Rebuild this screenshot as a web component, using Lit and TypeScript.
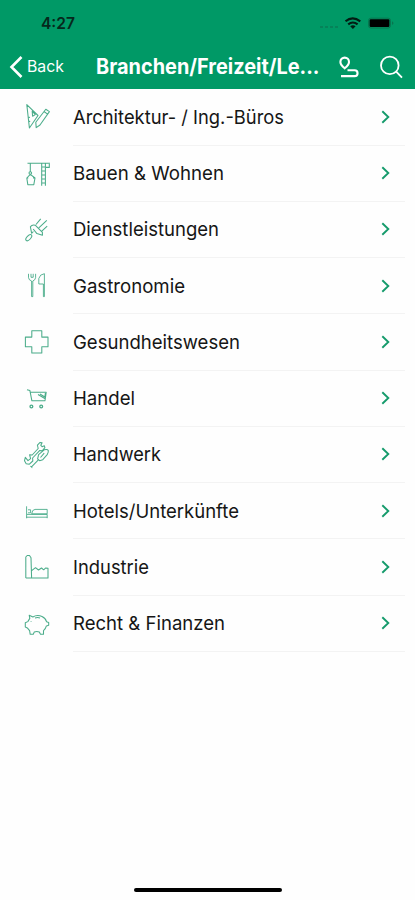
import { LitElement, html, css, svg } from "lit";
import { customElement } from "lit/decorators.js";

const rows = [
  { label: "Architektur- / Ing.-Büros", width: 211, icon: svg`<path d="M4.8 2.6 7.4 26 16 13.5ZM10.2 9.2l.4 5 2.7-1.6ZM23.8 7.2l3.6 2.4L18 23l-3.8 2.6-.4-5.3ZM22.3 9.8l3.3 2.3M6 15l2 .5M6.4 19l1.8.4"/>` },
  { label: "Bauen & Wohnen", width: 151, icon: svg`<path d="M5.5 4.3H28M8.3 4.3V13M8.3 15.3 4.8 19l1 6.7h6L13 19 8.3 15.3M4.8 19h1.5M11 19h2M19.7 4.3v22.4M23.4 4.3v22.4M19.5 8h4.1M19.5 12h4.1M19.5 16h4.1M19.5 20h4.1M19.5 24h4.1M24 8.4h3.3V5"/><circle cx="8.3" cy="14" r="1.3"/>` },
  { label: "Dienstleistungen", width: 146, icon: svg`<path d="M9.7 18.6 8.4 11.8q1.6-2.5 4.8-1.6l7.2 7.2v2.8l-5.5-1.6-3.7-4.6M14 9.5l4.7-5.7M16.8 12.8l8-7.4M19.8 16.2l5.4-5M9.6 18.3l1.8-1.8"/><ellipse cx="6.8" cy="22.7" rx="1.9" ry="3.8" transform="rotate(43 6.8 22.7)"/>` },
  { label: "Gastronomie", width: 112, icon: svg`<path d="M6.5 2.8v3.8q.3 2.6 3.1 3.4v15.6h1.2V10q2.6-1 2.8-3.4V2.8M9 2.8v3.5h2.2V2.8M21.4 25.6V13h-4.6V7.5q1-4.3 5.6-4.8v22.9Z" stroke-width=".9"/>` },
  { label: "Gesundheitswesen", width: 167, icon: svg`<path d="M9.8 3.8h10v6.3H26v9.7h-6.2V26h-10v-6.2H3.4v-9.7h6.4Z"/>` },
  { label: "Handel", width: 62, icon: svg`<path d="m5 5.8 2.9.8 2 10.2h13.4M8.6 8.2h15.6L23 16.8M16 10.5l6.8 4M18 10l4.8 3 .6-4"/><circle cx="9.4" cy="22.5" r="1.4" stroke-width="1.3"/><circle cx="19.2" cy="22.5" r="1.4" stroke-width="1.3"/>` },
  { label: "Handwerk", width: 88, icon: svg`<path d="M3.3 17.3 6 20.6l2.6-2-1-3.8 2.6.2 6-6.5-.8-3.3 2.7-2.8 2 .4-1.3 2.5 1.3 1.4 2.2-1 .6 2-2.5 3-2.8-.1-7 7.4.2 3-3.4 3.2-3.2-.4-1.7-3ZM9.3 27.2l7.3-7.6M8.4 26l2 2M15.6 18.8l1-4.2 5.6-4.8q3.3-1 4.1.6.4 1.8-1.1 4.2l-4.4 5.1-3.2 1ZM18.5 17.5l3.7-4.3"/>` },
  { label: "Hotels/Unterkünfte", width: 166, icon: svg`<path d="M4.6 10.3v12M5 18.4h20.2v3.8M4.6 21.2h20.6M9.7 17.8l1-3.2 2.3-1.2h12.2v4.4ZM6 13.8h2.6v3H6" stroke-width=".9"/>` },
  { label: "Industrie", width: 76, icon: svg`<path d="M3.8 26V5l1.4-1.5h2.3L9 5.8 9.6 26M3.8 26H26V16.2l-2.5-.2-1.8 1.8L19.5 16l-3 2-3-2.3-3.8 3"/>` },
  { label: "Recht & Finanzen", width: 152, icon: svg`<path d="m7.2 6.2 3.7 1.8Q15 5.4 20 7.5q3.7 1.8 4.5 5.2l2.2.8v2.8l-2.3.6q-.8 3.1-2.9 4.8v3.6h-3l-1.2-2.4q-2.5-.8-5 0l-1 2.4H8.2l-.6-3.6-2.3-2.8-2-.8v-4.3l2.5-1.2 2-3.2ZM13 9q2.6-1 5 0M8.7 12.5h.7"/>` },
];

@customElement("app-root")
class AppRoot extends LitElement {
  static styles = css`
    :host { display: block; font-family: Inter, "Liberation Sans", sans-serif; }
    .screen { height: 900px; width: 415px; display: flex; flex-direction: column; background: #fefefe; overflow: hidden; }
    .header { height: 88.5px; flex: none; background: #009966; box-sizing: border-box; display: flex; flex-direction: column; }
    .status { height: 46px; display: flex; align-items: center; justify-content: space-between; padding: 0 20px 0 41px; color: #06291c; }
    .time { font-size: 15.5px; font-weight: 600; }
    .tray { display: flex; align-items: center; }
    .nav { height: 42px; display: flex; align-items: center; color: #fff; }
    .back { display: flex; align-items: center; width: 96px; box-sizing: border-box; padding-left: 9px; gap: 4px; }
    .title { font-size: 21px; font-weight: 650; }
    .tools { display: flex; padding-left: 13px; gap: 20px; }
    svg { display: block; flex: none; overflow: visible; }
    text { font-family: Inter, "Liberation Sans", sans-serif; }
    .list { flex: 1; padding-top: .75px; }
    .row { height: 56.25px; display: flex; align-items: center; padding-left: 22px; }
    .icon { fill: none; stroke: #2c9e76; stroke-width: 1.05; stroke-linejoin: round; opacity: .85; }
    .content { margin-left: 21px; width: 332px; height: 100%; box-sizing: border-box; border-bottom: 1px solid #f3f3f3; display: flex; align-items: center; justify-content: space-between; padding-right: 15px; }
    .label { font-size: 19px; font-weight: 370; fill: #161616; }
    .home { width: 148px; height: 4px; border-radius: 2px; background: #000; margin: 0 auto 8px; flex: none; }
  `;

  render() {
    return html`<div class="screen">
      <div class="header">
        <div class="status">
          <svg width="36" height="20"><text class="time" x="0" y="15.8" fill="currentColor" textLength="34" lengthAdjust="spacingAndGlyphs">4:27</text></svg>
          <div class="tray">
            <svg width="75" height="16" viewBox="0 0 75 16">
              <path d="M0 12h19" stroke="#087b55" stroke-width="1.6" stroke-dasharray="3 2"/>
              <g fill="none" stroke="#031c13" stroke-width="2.1"><path d="M25.5 6.3q7-6 14.8 0M28.2 9.4q4.7-3.8 9.4 0"/></g>
              <path d="m30.2 11.3 2.7 2.7 2.7-2.7q-2.7-2-5.4 0Z" fill="#031c13"/>
              <rect x="48.5" y="3.2" width="22" height="9.8" rx="2.4" fill="none" stroke="#08754f"/>
              <rect x="49.6" y="4.2" width="19.8" height="7.8" rx="1.2"/>
              <path d="M72 6.2q3 1.9 0 3.8Z" fill="#08754f"/>
            </svg>
          </div>
        </div>
        <div class="nav">
          <div class="back">
            <svg width="14" height="24" viewBox="0 0 14 24"><path d="m12.5 2-10 10 10 10" fill="none" stroke="#fff" stroke-width="2.6"/></svg>
            <svg width="39" height="24"><text x="0" y="17.3" font-size="16.5" fill="#fff" textLength="37" lengthAdjust="spacingAndGlyphs">Back</text></svg>
          </div>
          <svg width="230" height="30"><text class="title" x="0" y="22.3" fill="#fff" textLength="223.5" lengthAdjust="spacingAndGlyphs">Branchen/Freizeit/Le...</text></svg>
          <div class="tools">
            <svg width="20" height="24" viewBox="0 0 20 24" fill="none" stroke="#fff" stroke-width="2.1"><path d="M5.7 13.3Q1.4 9.7 1.4 6.9a4.3 4.3 0 0 1 8.6 0q0 2.8-4.3 6.4ZM8.5 15.2h7.1a2.9 2.9 0 0 1 0 5.9H2"/></svg>
            <svg width="26" height="24" viewBox="0 0 26 24" fill="none" stroke="#fff" stroke-width="1.8"><circle cx="10.8" cy="10.4" r="8.8"/><path d="m17.2 16.6 5.8 6"/></svg>
          </div>
        </div>
      </div>
      <div class="list">
        ${rows.map((r) => html`<div class="row">
          <svg class="icon" width="30" height="30" viewBox="0 0 30 30">${r.icon}</svg>
          <div class="content">
            <svg width="240" height="30"><text class="label" x="0" y="21.6" textLength=${r.width} lengthAdjust="spacingAndGlyphs">${r.label}</text></svg>
            <svg width="9" height="14" viewBox="0 0 9 14"><path d="m1.3 1.3 6 5.7-6 5.7" fill="none" stroke="#169b6c" stroke-width="1.9"/></svg>
          </div>
        </div>`)}
      </div>
      <div class="home"></div>
    </div>`;
  }
}
